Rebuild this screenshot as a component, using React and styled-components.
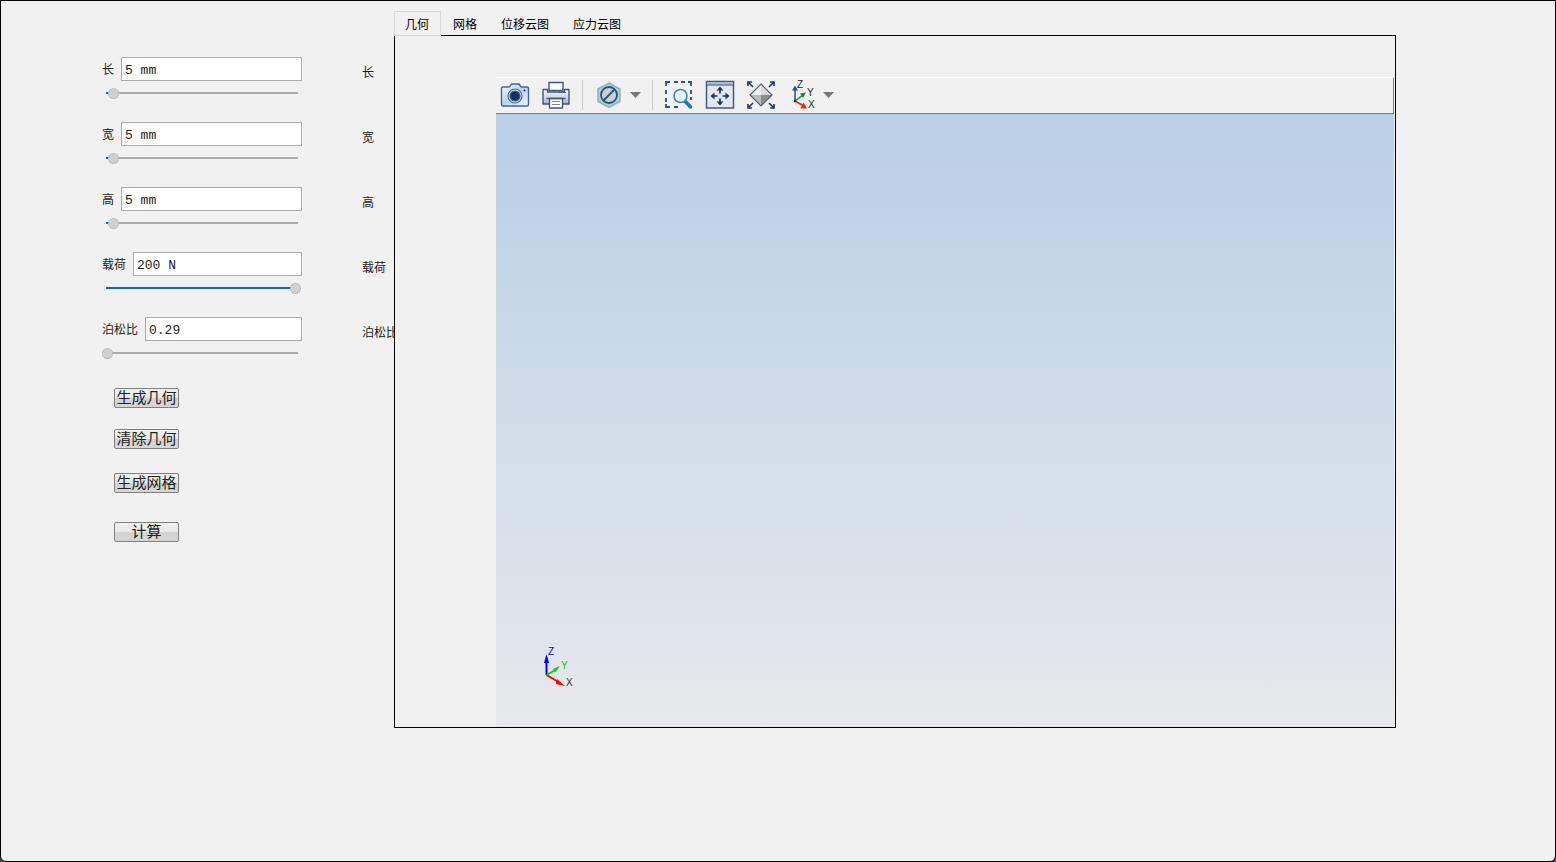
import React, { useState } from "react";
import styled, { createGlobalStyle } from "styled-components";

const GlobalStyle = createGlobalStyle`
  body {
    margin: 0;
    background: #4a4450;
  }

  * {
    box-sizing: border-box;
  }
`;

const Page = styled.div`
  display: flex;
  align-items: flex-start;
  min-height: 100vh;
  padding: 10px 159px 10px 100px;
  border: 1px solid #000;
  border-radius: 0 0 6px 6px;
  background: #f1f1f1;
  color: #222;
  font-family: "Noto Sans CJK SC", sans-serif;
  font-size: 12px;
`;

const Sidebar = styled.div`
  flex: none;
  width: 201px;
  padding-top: 46px;
`;

const Fields = styled.div`
  display: flex;
  flex-direction: column;
  gap: 19px;
`;

const Field = styled.div`
  display: flex;
  flex-direction: column;
  gap: 2px;
`;

const FieldRow = styled.div`
  display: flex;
  align-items: center;
  gap: 7px;
  height: 24px;
  padding-left: 1px;

  label {
    flex: none;
    line-height: 16px;
  }
`;

const TextBox = styled.input`
  flex: 1;
  min-width: 0;
  height: 24px;
  padding: 3px 3px 0;
  border: 1px solid #ababab;
  background: #fff;
  color: #222;
  font-family: "Liberation Mono", monospace;
  font-size: 13px;

  &:focus {
    outline: none;
  }
`;

const SliderRow = styled.div`
  display: flex;
  height: 20px;
  padding-right: 1px;
`;

const Slider = styled.input`
  appearance: none;
  width: 100%;
  height: 20px;
  margin: 0;
  border: 0 solid transparent;
  border-left-width: 1px;
  background: linear-gradient(
      to right,
      #0a68b8 ${(p) => p.$fill}%,
      #ababab ${(p) => p.$fill}%
    )
    4px 9px / 192px 2px no-repeat;

  &::-webkit-slider-thumb {
    appearance: none;
    width: 11px;
    height: 11px;
    border: 1px dotted #aaa;
    border-radius: 50%;
    background: #d0d0d0;
  }

  &:focus {
    outline: none;
  }
`;

const Actions = styled.div`
  display: flex;
  flex-direction: column;
  align-items: flex-start;
  padding: 25px 0 0 13px;
`;

const ActionButton = styled.button`
  width: 65px;
  height: 20px;
  margin: 0 0 ${(p) => p.$space}px;
  padding: 0 0 2px;
  border: 1px solid #808080;
  border-radius: 2px;
  background: linear-gradient(#f0f0f0, #e8e8e8 50%, #d3d3d3 50%, #d6d6d6);
  color: #222;
  font-family: inherit;
  font-size: 15px;
  line-height: 16px;
  white-space: nowrap;
`;

const SideLabels = styled.div`
  flex: none;
  display: flex;
  flex-direction: column;
  gap: 49px;
  width: 32px;
  margin-left: 60px;
  padding-top: 53px;
  overflow: hidden;
  line-height: 16px;
  white-space: nowrap;
`;

const Main = styled.main`
  flex: 1;
  min-width: 0;
`;

const TabList = styled.div`
  position: relative;
  display: flex;
  height: 25px;
  margin-bottom: -1px;
`;

const Tab = styled.button`
  height: 25px;
  padding: ${(p) => (p.$active ? "0 11px 0 10px" : "0 12px")};
  border: ${(p) => (p.$active ? "1px solid #d9d9d9" : "0")};
  background: ${(p) => (p.$active ? "#f1f1f1" : "none")};
  color: #000;
  font-family: inherit;
  font-size: 12px;
  line-height: 16px;
`;

const TabPanel = styled.section`
  padding: 41px 1px 0 101px;
  border: 1px solid #000;
`;

const Toolbar = styled.div`
  display: flex;
  align-items: center;
  height: 37px;
  padding: 0 4px 1px;
  border-style: solid;
  border-width: 1px 1px 1px 0;
  border-color: #fff #808080 #808080;
`;

const ToolButton = styled.button`
  display: flex;
  align-items: center;
  gap: 6px;
  margin-right: 11px;
  padding: 0;
  border: 0;
  background: none;

  svg {
    display: block;
  }
`;

const Separator = styled.span`
  width: 1px;
  height: 30px;
  margin-right: 11px;
  background: #ccc;
`;

const Viewport = styled.div`
  display: flex;
  align-items: flex-end;
  height: calc(100vh - 249px);
  min-height: 200px;
  padding: 0 0 35px 44px;
  background: linear-gradient(#b9cee6, #d0dde9 50%, #e7e8ec);
`;

const CameraIcon = () => (
  <svg width="30" height="30" viewBox="0 0 30 30">
    <defs>
      <linearGradient id="cam" x1="0" y1="0" x2="1" y2="1">
        <stop offset="0" stopColor="#f8fcff" />
        <stop offset="0.5" stopColor="#b8d4ef" />
        <stop offset="1" stopColor="#eef6fd" />
      </linearGradient>
    </defs>
    <path
      d="M3 7h5.5q1.500 0 2-1.500L11.500 4h7.500l1 1.500q.5 1.500 2 1.500H27q1.500 0 1.500 1.500v16q0 1.500-1.500 1.500H3q-1.500 0-1.500-1.500v-16Q1.500 7 3 7z"
      fill="url(#cam)"
      stroke="#4b6390"
      strokeWidth="1.4"
      strokeLinejoin="round"
    />
    <circle cx="15" cy="16" r="7" fill="#dbe8f6" stroke="#536987" strokeWidth="1.2" />
    <circle cx="15" cy="16" r="5" fill="#17305f" stroke="#3c5c8a" strokeWidth="1.2" />
    <circle cx="24.500" cy="10.500" r="1" fill="#17305f" />
  </svg>
);

const PrinterIcon = () => (
  <svg width="30" height="30" viewBox="0 0 30 30">
    <defs>
      <linearGradient id="prn" x1="0" y1="0" x2="0" y2="1">
        <stop offset="0" stopColor="#fff" />
        <stop offset="1" stopColor="#a9afc8" />
      </linearGradient>
    </defs>
    <g stroke="#405681" strokeWidth="1.4" strokeLinejoin="round">
      <path d="M8 2.500h14v8h-14z" fill="#fff" />
      <path d="M2 9.500h4.500v2.500h17v-2.500H28v14.500H2z" fill="url(#prn)" />
      <path d="M8.500 18.500h13v9.500h-13z" fill="#fff" />
      <path d="M5.500 18.500h19" />
    </g>
    <path d="M11 21.500h8M11 24.500h8" stroke="#7485a8" />
    <path d="M18 12.500h7" stroke="#405681" strokeDasharray="3 1" />
  </svg>
);

const HiddenIcon = () => (
  <svg width="30" height="30" viewBox="0 0 30 30">
    <path d="M15 3 26 9v12.500l-11 6-11-6V9z" fill="#b4cbd1" stroke="#91b4bb" strokeWidth="1.500" />
    <circle cx="15" cy="15" r="8" fill="#c9ced8" stroke="#205b71" strokeWidth="1.800" />
    <path d="M9.500 20.500 20.500 9.500" stroke="#205b71" strokeWidth="1.800" />
  </svg>
);

const ZoomAreaIcon = () => (
  <svg width="30" height="30" viewBox="0 0 30 30" fill="none">
    <path
      d="M2 6V2h4M10 2h4M17 2h4M24 2h3v4M27 10v4M2 10v4M2 18v4M2 24v3h4M10 27h4M27 17v3"
      stroke="#344d7c"
      strokeWidth="1.800"
    />
    <path d="m21 21 5.500 6" stroke="#2474ac" strokeWidth="3.500" strokeLinecap="round" />
    <circle cx="16.500" cy="16" r="6.500" fill="#e5f4fc" stroke="#4586b5" strokeWidth="1.600" />
  </svg>
);

const PanIcon = () => (
  <svg width="30" height="30" viewBox="0 0 30 30">
    <path d="M1.500 1.500h27v26.500h-27z" fill="#e3e7ef" stroke="#405a8c" strokeWidth="1.500" />
    <path d="M2 2h26v3h-26z" fill="#a9bbd5" />
    <path d="M2 5h26" stroke="#405a8c" />
    <g fill="none" stroke="#1f3765" strokeWidth="1.700">
      <path d="M15 13.500V8M15 18.500V24M12.500 16H7M17.500 16H23" />
    </g>
    <path
      d="m15 6.500 3.500 4h-7zM15 25.500l3.500-4h-7zM5.500 16l4-3.500v7zM24.500 16l-4-3.500v7z"
      fill="#1f3765"
    />
  </svg>
);

const FitIcon = () => (
  <svg width="30" height="30" viewBox="0 0 30 30">
    <path d="M15 4 26 15 15 26 4 15z" fill="#f0f0f0" />
    <path d="M15 4 26 15H15z" fill="#dcdcdc" />
    <path d="M15 15h11L15 26z" fill="#8c8c8c" />
    <path d="M4 15h11v11z" fill="#bcbcbc" />
    <path d="M15 4 26 15 15 26 4 15z" fill="none" stroke="#4c5d7d" strokeWidth="1.200" />
    <g fill="none" stroke="#203b69" strokeWidth="1.700">
      <path d="M7 7 2 2M23 7l5-5M7 23l-5 5M23 23l5 5" />
      <path d="M2 6V2h4M24 2h4v4M2 24v4h4M28 24v4h-4" />
    </g>
  </svg>
);

const AxisIcon = () => (
  <svg width="30" height="30" viewBox="-4 0 30 30" fontFamily="Liberation Sans" fontSize="10" fill="#222">
    <path d="M4 21V9" stroke="#2949a8" strokeWidth="1.500" />
    <path d="m1 10.500 3-5 3 5z" fill="#2949a8" />
    <path d="m4 21 8-6" stroke="#168347" strokeWidth="1.500" />
    <path d="m9 13.500 6-1-3 5.500z" fill="#168347" />
    <path d="m4 21 8 4.500" stroke="#ee2020" strokeWidth="1.500" />
    <path d="m12.500 22.500 3.500 6h-6.500z" fill="#ee2020" />
    <circle cx="4" cy="21" r="1.200" />
    <text x="6" y="8">Z</text>
    <text x="16" y="16">Y</text>
    <text x="17" y="28">X</text>
  </svg>
);

const Arrow = () => (
  <svg width="11" height="6" viewBox="0 0 11 6">
    <path d="M0 0h11L5.500 6z" fill="#777" />
  </svg>
);

const Triad = () => (
  <svg width="36" height="46" viewBox="0 0 36 46" fontFamily="Liberation Sans" fontSize="10">
    <path d="M6.500 29V12" stroke="#0000f0" strokeWidth="2" />
    <path d="m4 17 2.500-9L9 17z" fill="#0000f0" />
    <path d="m6.500 29 9-5" stroke="#00d000" strokeWidth="2" />
    <path d="m13 23 7-3-4.500 6z" fill="#00d000" />
    <path d="m6.500 29 12 7" stroke="#f00" strokeWidth="2" />
    <path d="m17 33 8 7-9-2z" fill="#f00" />
    <text x="8" y="9" fill="#0000f0">Z</text>
    <text x="21" y="23" fill="#00d000">Y</text>
    <text x="26" y="40" fill="#333">X</text>
  </svg>
);

const fields = [
  { id: "length", label: "长", text: "5 mm", value: 3 },
  { id: "width", label: "宽", text: "5 mm", value: 3 },
  { id: "height", label: "高", text: "5 mm", value: 3 },
  { id: "load", label: "载荷", text: "200 N", value: 100 },
  { id: "poisson", label: "泊松比", text: "0.29", value: 0 },
];

const actions = [
  { label: "生成几何", space: 21 },
  { label: "清除几何", space: 24 },
  { label: "生成网格", space: 29 },
  { label: "计算", space: 0 },
];

const tabs = ["几何", "网格", "位移云图", "应力云图"];

function ParamField({ field }) {
  const [value, setValue] = useState(field.value);

  return (
    <Field>
      <FieldRow>
        <label htmlFor={field.id}>{field.label}</label>
        <TextBox id={field.id} type="text" defaultValue={field.text} />
      </FieldRow>
      <SliderRow>
        <Slider
          type="range"
          aria-label={field.label}
          value={value}
          $fill={value}
          onChange={(e) => setValue(Number(e.target.value))}
        />
      </SliderRow>
    </Field>
  );
}

function App() {
  const [active, setActive] = useState(0);

  return (
    <>
      <GlobalStyle />
      <Page>
        <Sidebar>
          <Fields>
            {fields.map((field) => (
              <ParamField key={field.id} field={field} />
            ))}
          </Fields>
          <Actions>
            {actions.map((action) => (
              <ActionButton key={action.label} type="button" $space={action.space}>
                {action.label}
              </ActionButton>
            ))}
          </Actions>
        </Sidebar>

        <SideLabels>
          {fields.map((field) => (
            <span key={field.id}>{field.label}</span>
          ))}
        </SideLabels>

        <Main>
          <TabList role="tablist">
            {tabs.map((tab, i) => (
              <Tab
                key={tab}
                type="button"
                role="tab"
                aria-selected={i === active}
                $active={i === active}
                onClick={() => setActive(i)}
              >
                {tab}
              </Tab>
            ))}
          </TabList>
          <TabPanel role="tabpanel">
            <Toolbar>
              <ToolButton type="button" aria-label="Camera">
                <CameraIcon />
              </ToolButton>
              <ToolButton type="button" aria-label="Print">
                <PrinterIcon />
              </ToolButton>
              <Separator />
              <ToolButton type="button" aria-label="Visibility">
                <HiddenIcon />
                <Arrow />
              </ToolButton>
              <Separator />
              <ToolButton type="button" aria-label="Zoom">
                <ZoomAreaIcon />
              </ToolButton>
              <ToolButton type="button" aria-label="Pan">
                <PanIcon />
              </ToolButton>
              <ToolButton type="button" aria-label="Fit">
                <FitIcon />
              </ToolButton>
              <ToolButton type="button" aria-label="View">
                <AxisIcon />
                <Arrow />
              </ToolButton>
            </Toolbar>
            <Viewport>
              <Triad />
            </Viewport>
          </TabPanel>
        </Main>
      </Page>
    </>
  );
}

export default App;
